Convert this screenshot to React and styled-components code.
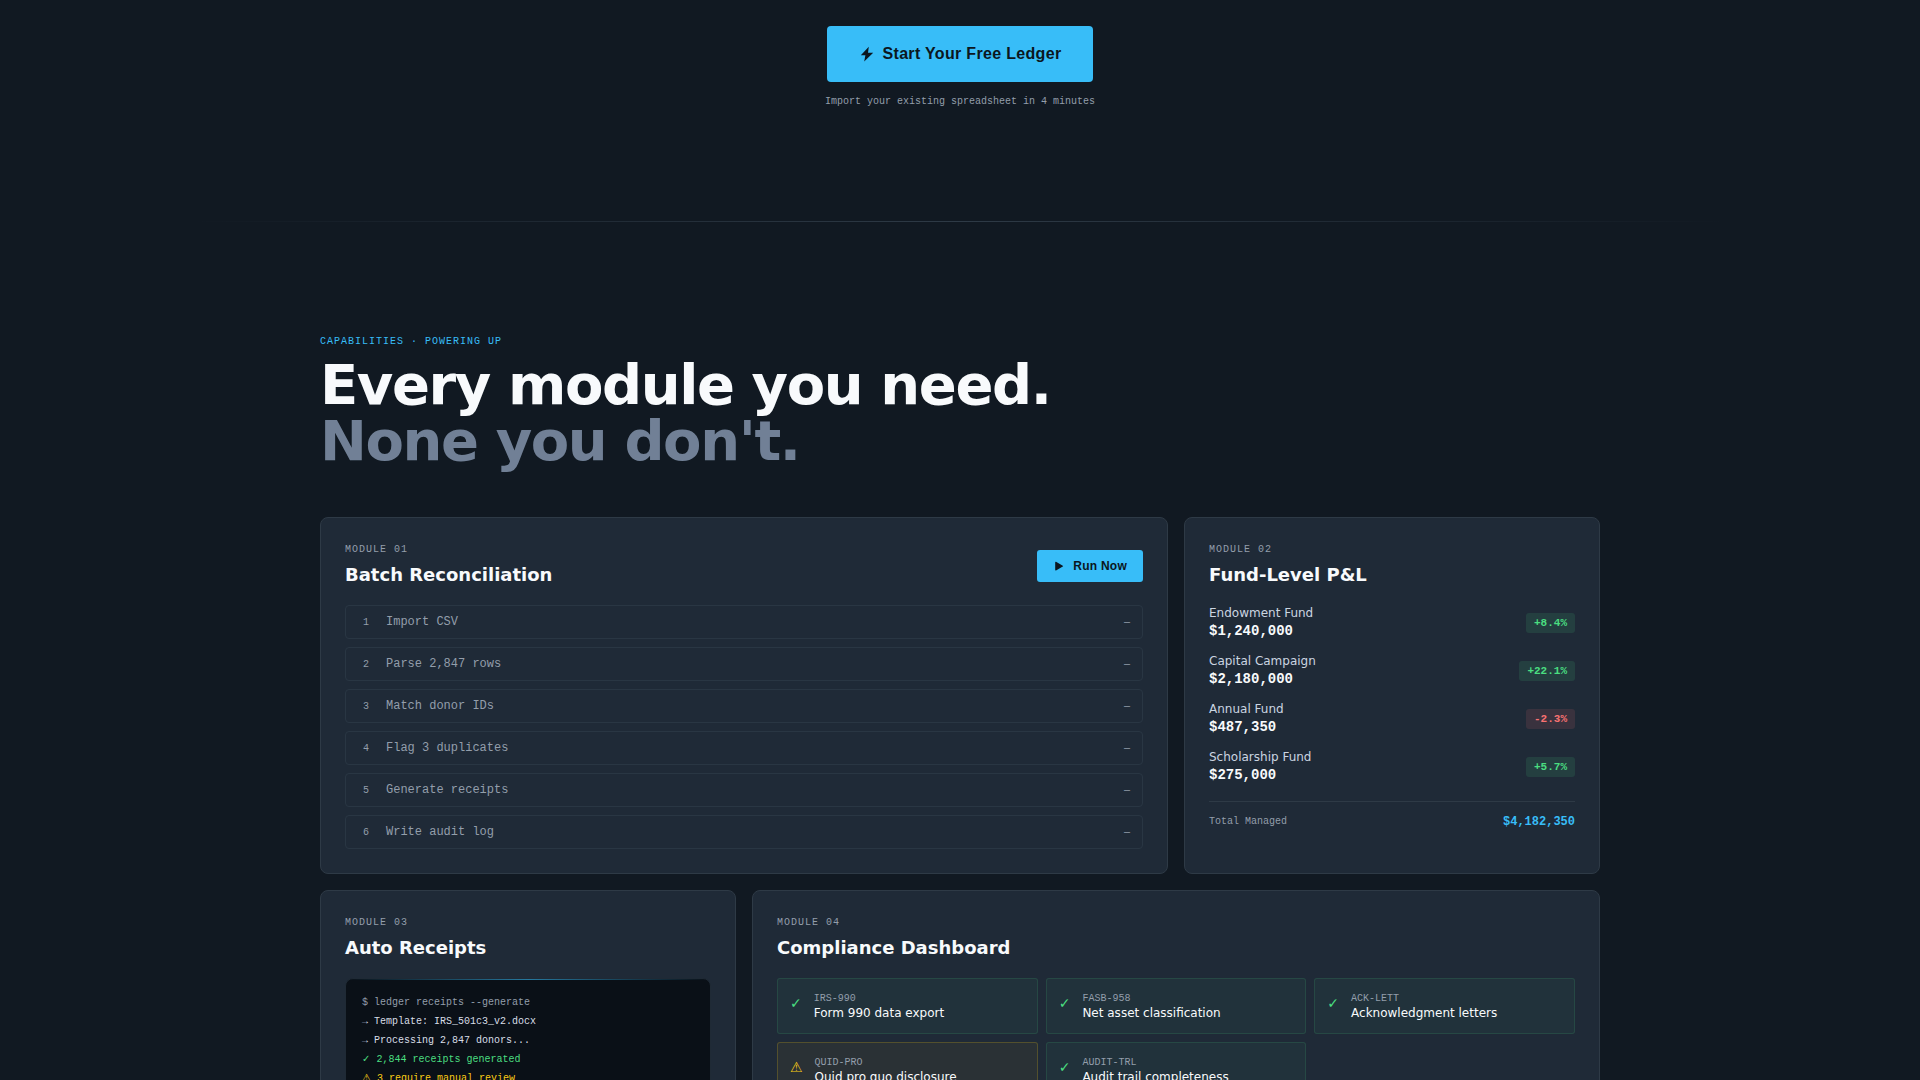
import React from "react";
import styled, { createGlobalStyle } from "styled-components";

const sans = '"DejaVu Sans", sans-serif';
const ui = '"Liberation Sans", Arial, sans-serif';
const mono = '"Liberation Mono", "DejaVu Sans", monospace';

const color = {
  page: "#111922",
  card: "#1f2a37",
  line: "#2e3a46",
  accent: "#38bdf8",
  ink: "#0b1620",
  text: "#f8fafc",
  soft: "#cbd5e1",
  muted: "#939eab",
  dim: "#718096",
  green: "#4ade80",
  red: "#f87171",
  yellow: "#facc15",
};

const GlobalStyle = createGlobalStyle`
  *, *::before, *::after { box-sizing: border-box; }
  body { margin: 0; background: ${color.page}; color: ${color.text}; font-family: ${sans}; }
  h2, h3, p, ol, ul, dl, dd { margin: 0; padding: 0; }
  ol, ul { list-style: none; }
`;

const Page = styled.main`
  height: 100vh;
  overflow: hidden;
  display: flex;
  flex-direction: column;
`;

const Hero = styled.section`
  flex: none;
  display: flex;
  flex-direction: column;
  align-items: center;
  gap: 12px;
  padding: 26px 24px 112px;
`;

const Button = styled.button`
  display: inline-flex;
  align-items: center;
  gap: 8px;
  height: ${(p) => (p.$large ? 56 : 32)}px;
  padding: 0 ${(p) => (p.$large ? 32 : 16)}px;
  border: 0;
  border-radius: ${(p) => (p.$large ? 4 : 3)}px;
  background: ${color.accent};
  color: ${color.ink};
  font: 700 ${(p) => (p.$large ? 16 : 12)}px ${ui};
  letter-spacing: 0.02em;
  cursor: pointer;
`;

const Hint = styled.p`
  font: 10px/15px ${mono};
  color: ${color.muted};
`;

const Divider = styled.hr`
  flex: none;
  width: 80%;
  height: 1px;
  margin: 0 auto;
  border: 0;
  background: linear-gradient(90deg, transparent, ${color.line}, transparent);
`;

const Section = styled.section`
  flex: none;
  width: 100%;
  max-width: 1328px;
  margin: 0 auto;
  padding: 112px 24px;
`;

const Eyebrow = styled.p`
  font: 10px/15px ${mono};
  letter-spacing: 1px;
  text-transform: uppercase;
  color: ${(p) => (p.$accent ? color.accent : color.muted)};
`;

const Headline = styled.h2`
  margin: 8px 0 48px;
  font: 700 56px/56px ${sans};
  letter-spacing: -0.025em;
`;

const HeadlineMuted = styled.span`
  display: block;
  color: ${color.dim};
`;

const Grid = styled.div`
  display: grid;
  grid-template-columns: repeat(3, minmax(0, 1fr));
  gap: 16px;
`;

const Card = styled.article`
  grid-column: span ${(p) => p.$span || 1};
  padding: 24px;
  border: 1px solid ${color.line};
  border-radius: 8px;
  background: ${color.card};
`;

const CardHeader = styled.header`
  display: flex;
  align-items: center;
  justify-content: space-between;
  height: 47px;
  margin-bottom: 16px;
`;

const CardTitle = styled.h3`
  margin-top: 4px;
  font: 700 18px/28px ${sans};
`;

const Steps = styled.ol`
  display: grid;
  gap: 8px;
`;

const Step = styled.li`
  display: flex;
  align-items: center;
  gap: 12px;
  height: 34px;
  padding: 0 12px;
  border: 1px solid #293643;
  border-radius: 4px;
  font: 12px/16px ${mono};
  color: ${color.muted};
`;

const StepNumber = styled.span`
  width: 16px;
  font-size: 10px;
  line-height: 15px;
  text-align: center;
`;

const StepStatus = styled.span`
  margin-left: auto;
  font-size: 10px;
  line-height: 15px;
`;

const Funds = styled.ul`
  display: grid;
  gap: 12px;
`;

const Fund = styled.li`
  display: flex;
  align-items: center;
  justify-content: space-between;
  height: 36px;
`;

const FundName = styled.p`
  font: 12px/16px ${sans};
  color: ${color.soft};
`;

const FundAmount = styled.p`
  font: 700 14px/20px ${mono};
`;

const Change = styled.span`
  padding: 4px 8px;
  border-radius: 3px;
  font: 700 11px/12px ${mono};
  color: ${(p) => (p.$down ? color.red : color.green)};
  background: ${(p) => (p.$down ? "rgba(248,113,113,0.12)" : "rgba(74,222,128,0.12)")};
`;

const Total = styled.div`
  display: flex;
  align-items: center;
  justify-content: space-between;
  margin-top: 16px;
  padding-top: 12px;
  border-top: 1px solid ${color.line};
  font: 10px/16px ${mono};
  color: ${color.muted};
`;

const TotalValue = styled.strong`
  font-size: 12px;
  color: ${color.accent};
`;

const Terminal = styled.div`
  display: grid;
  gap: 4px;
  position: relative;
  overflow: hidden;
  padding: 16px;
  border: 1px solid #1f2a35;
  border-radius: 8px;
  background: #0a1017;
  &::before {
    content: "";
    position: absolute;
    inset: 0 0 auto;
    height: 1px;
    background: linear-gradient(90deg, transparent, ${color.accent}, transparent);
    opacity: 0.6;
  }
`;

const TerminalLine = styled.p`
  font: 10px/15px ${mono};
  height: 15px;
  white-space: pre;
  color: ${(p) => p.$tone};
`;

const Checks = styled.ul`
  display: grid;
  grid-template-columns: repeat(3, minmax(0, 1fr));
  gap: 8px;
`;

const Check = styled.li`
  display: flex;
  align-items: flex-start;
  gap: 12px;
  height: 56px;
  padding: 12px;
  border: 1px solid ${(p) => (p.$warn ? "rgba(250,204,21,0.2)" : "rgba(74,222,128,0.13)")};
  border-radius: 3px;
  background: ${(p) => (p.$warn ? "rgba(250,204,21,0.05)" : "rgba(74,222,128,0.05)")};
`;

const CheckIcon = styled.span`
  font: 14px/24px ${sans};
  color: ${(p) => (p.$warn ? color.yellow : color.green)};
`;

const CheckCode = styled.p`
  font: 10px/15px ${mono};
  color: ${color.muted};
`;

const CheckName = styled.p`
  font: 12px/15px ${sans};
`;

const steps = ["Import CSV", "Parse 2,847 rows", "Match donor IDs", "Flag 3 duplicates", "Generate receipts", "Write audit log"];

const funds = [
  ["Endowment Fund", "$1,240,000", "+8.4%"],
  ["Capital Campaign", "$2,180,000", "+22.1%"],
  ["Annual Fund", "$487,350", "-2.3%"],
  ["Scholarship Fund", "$275,000", "+5.7%"],
];

const log = [
  ["$ ledger receipts --generate", color.muted],
  ["→ Template: IRS_501c3_v2.docx", "#d8dee6"],
  ["→ Processing 2,847 donors...", "#d8dee6"],
  ["✓ 2,844 receipts generated", color.green],
  ["⚠ 3 require manual review", color.yellow],
];

const checks = [
  ["IRS-990", "Form 990 data export"],
  ["FASB-958", "Net asset classification"],
  ["ACK-LETT", "Acknowledgment letters"],
  ["QUID-PRO", "Quid pro quo disclosure", true],
  ["AUDIT-TRL", "Audit trail completeness"],
];

function ModuleHeader({ number, title, children }) {
  return (
    <CardHeader>
      <div>
        <Eyebrow>Module {number}</Eyebrow>
        <CardTitle>{title}</CardTitle>
      </div>
      {children}
    </CardHeader>
  );
}

export default function App() {
  return (
    <Page>
      <GlobalStyle />
      <Hero>
        <Button type="button" $large>
          <svg width="16" height="16" viewBox="0 0 16 16" fill="currentColor" aria-hidden="true">
            <path d="M9.8 .8 1.8 9.2h4.6L5.2 15.6 14.2 6.8H9z" />
          </svg>
          Start Your Free Ledger
        </Button>
        <Hint>Import your existing spreadsheet in 4 minutes</Hint>
      </Hero>
      <Divider />
      <Section>
        <Eyebrow $accent>Capabilities · Powering up</Eyebrow>
        <Headline>
          Every module you need.
          <HeadlineMuted>None you don't.</HeadlineMuted>
        </Headline>
        <Grid>
          <Card $span={2}>
            <ModuleHeader number="01" title="Batch Reconciliation">
              <Button type="button">
                <svg width="12" height="12" viewBox="0 0 12 12" fill="currentColor" aria-hidden="true">
                  <path d="M2.2 2.2v7.8c0 .4.4.6.8.4l6.8-3.8a.5.5 0 0 0 0-.9L3 1.8c-.4-.2-.8 0-.8.4z" />
                </svg>
                Run Now
              </Button>
            </ModuleHeader>
            <Steps>
              {steps.map((label, i) => (
                <Step key={label}>
                  <StepNumber>{i + 1}</StepNumber>
                  {label}
                  <StepStatus>—</StepStatus>
                </Step>
              ))}
            </Steps>
          </Card>
          <Card>
            <ModuleHeader number="02" title="Fund-Level P&L" />
            <Funds>
              {funds.map(([name, amount, change]) => (
                <Fund key={name}>
                  <div>
                    <FundName>{name}</FundName>
                    <FundAmount>{amount}</FundAmount>
                  </div>
                  <Change $down={change.startsWith("-")}>{change}</Change>
                </Fund>
              ))}
            </Funds>
            <Total>
              Total Managed
              <TotalValue>$4,182,350</TotalValue>
            </Total>
          </Card>
          <Card>
            <ModuleHeader number="03" title="Auto Receipts" />
            <Terminal>
              {log.map(([line, tone]) => (
                <TerminalLine key={line} $tone={tone}>{line}</TerminalLine>
              ))}
            </Terminal>
          </Card>
          <Card $span={2}>
            <ModuleHeader number="04" title="Compliance Dashboard" />
            <Checks>
              {checks.map(([code, name, warn]) => (
                <Check key={code} $warn={warn}>
                  <CheckIcon $warn={warn}>{warn ? "⚠" : "✓"}</CheckIcon>
                  <div>
                    <CheckCode>{code}</CheckCode>
                    <CheckName>{name}</CheckName>
                  </div>
                </Check>
              ))}
            </Checks>
          </Card>
        </Grid>
      </Section>
    </Page>
  );
}
